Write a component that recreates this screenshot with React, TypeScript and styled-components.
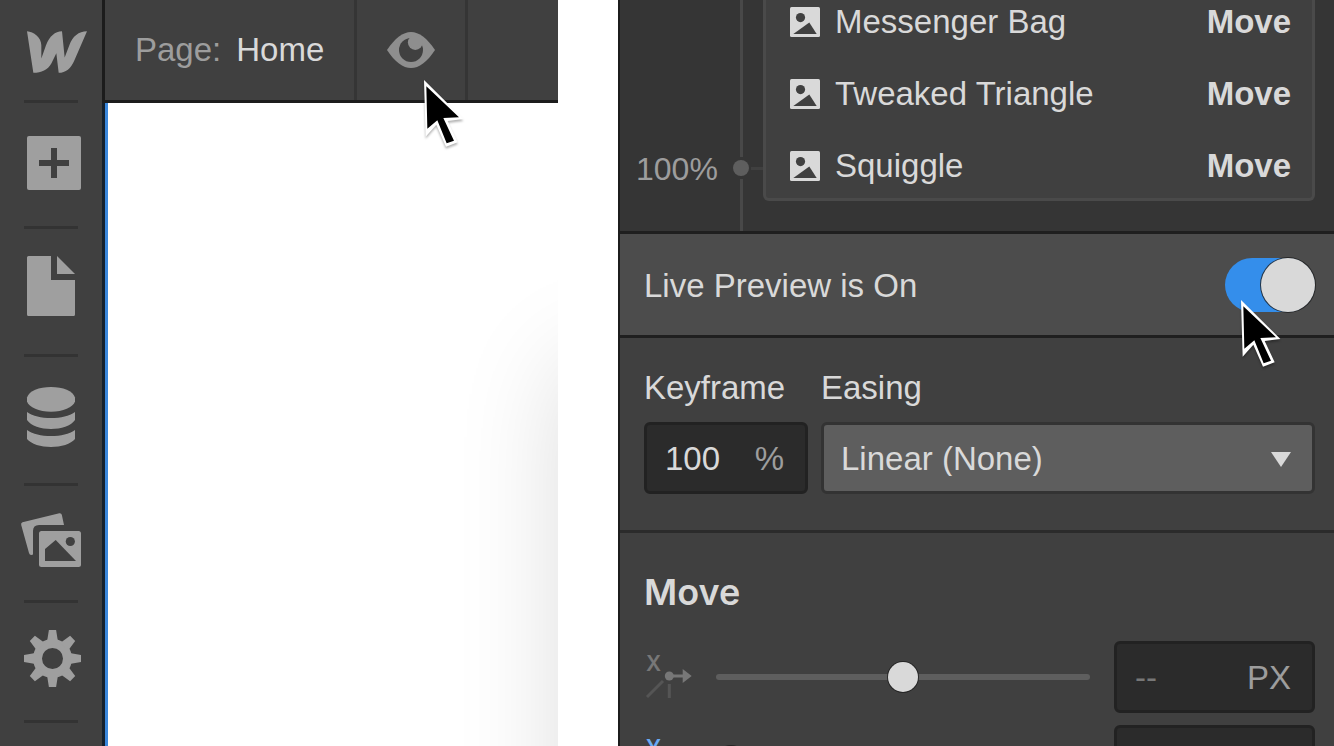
import React, { useState } from "react";
import styled, { createGlobalStyle } from "styled-components";

const color = {
  panel: "#404040",
  sunken: "#353535",
  raised: "#4c4c4c",
  field: "#2b2b2b",
  edge: "#1f1f1f",
  icon: "#9f9f9f",
  muted: "#9d9d9d",
  text: "#d9d9d9",
  control: "#5e5e5e",
  blue: "#348eeb",
};

const GlobalStyle = createGlobalStyle`
  *, *::before, *::after { box-sizing: border-box; }
  body {
    margin: 0;
    overflow: hidden;
    background: #fff;
    color: ${color.text};
    font: 33px/34px "Liberation Sans", Arial, sans-serif;
  }
  button, input, select { font: inherit; color: inherit; }
  button { border: 0; padding: 0; background: none; }
  svg { display: block; flex: none; }
`;

const Page = styled.div`
  display: flex;
  gap: 60px;
  height: 100vh;
  overflow: hidden;
`;

const Designer = styled.div`
  flex: 558 558 558px;
  min-width: 0;
  display: flex;
`;

const Sidebar = styled.nav`
  flex: none;
  width: 102px;
  padding: 0 24px;
  background: ${color.panel};
`;

const SideButton = styled.button<{ $top: number; $bottom: number; $left?: number }>`
  display: block;
  width: 54px;
  padding: ${(p) => p.$top}px 0 ${(p) => p.$bottom}px;
  border-bottom: 3px solid #333;
  color: ${color.icon};

  svg {
    margin-left: ${(p) => p.$left ?? 3}px;
    overflow: visible;
  }
`;

const Main = styled.div`
  flex: 1;
  min-width: 0;
  display: flex;
  flex-direction: column;
`;

const TopBar = styled.header`
  display: flex;
  flex: none;
  height: 103px;
  border-left: 3px solid #1c1c1c;
  border-bottom: 3px solid #1c1c1c;
  background: ${color.panel};
`;

const PagePicker = styled.button`
  display: flex;
  align-items: center;
  gap: 15px;
  width: 252px;
  padding-left: 30px;
  border-right: 3px solid #353535;
`;

const Muted = styled.span`
  color: ${color.muted};
`;

const PreviewButton = styled.button`
  position: relative;
  display: flex;
  align-items: center;
  width: 111px;
  padding-left: 30px;
  border-right: 3px solid #353535;
  color: #8e8e8e;
`;

const Pointer = styled.svg<{ $left: number; $top: number }>`
  position: absolute;
  z-index: 2;
  left: ${(p) => p.$left}px;
  top: ${(p) => p.$top}px;
  overflow: visible;
  pointer-events: none;
  filter: drop-shadow(0 2px 1px rgba(0, 0, 0, 0.3));
`;

const Canvas = styled.main`
  position: relative;
  flex: 1;
  overflow: hidden;
  border-left: 3px solid #13202d;
  background: #fff;
  box-shadow: inset 3px 0 0 #3a87dc;

  &::after {
    content: "";
    position: absolute;
    left: 100%;
    top: 260px;
    width: 400px;
    height: 200%;
    box-shadow: 4px 0 100px rgba(0, 0, 0, 0.14);
  }
`;

const Panel = styled.aside`
  flex: 716 716 716px;
  min-width: 0;
  border-left: 2px solid #1c1c1c;
  background: ${color.panel};
`;

const Timeline = styled.section`
  display: flex;
  background: ${color.sunken};
  border-bottom: 3px solid ${color.edge};
`;

const TimeLabel = styled.div`
  align-self: flex-end;
  width: 113px;
  padding: 0 0 45px 16px;
  color: ${color.muted};
  font-size: 32px;
`;

const Rail = styled.div`
  display: flex;
  flex-direction: column;
  align-items: center;
  gap: 3px;
  width: 16px;
  margin-right: 2px;
`;

const RailLine = styled.div<{ $grow?: boolean }>`
  flex: ${(p) => (p.$grow ? "1" : "none")};
  width: 3px;
  height: 52px;
  background: #484848;
`;

const RailDot = styled.div`
  width: 16px;
  height: 16px;
  border-radius: 50%;
  background: ${color.control};
`;

const Connector = styled.div`
  align-self: flex-end;
  width: 12px;
  height: 3px;
  margin-bottom: 61px;
  background: #404040;
`;

const ActionList = styled.ul`
  flex: 1;
  min-width: 0;
  display: flex;
  flex-direction: column;
  gap: 38px;
  margin: 0 19px 30px 0;
  padding: 5px 21px 15px 24px;
  list-style: none;
  background: ${color.panel};
  border: 3px solid #4a4a4a;
  border-top: 0;
  border-radius: 0 0 6px 6px;
`;

const ActionRow = styled.li`
  display: flex;
  align-items: center;
  gap: 15px;
`;

const ActionName = styled.span`
  flex: 1;
  min-width: 0;
  white-space: nowrap;
`;

const LiveRow = styled.label`
  display: flex;
  align-items: center;
  justify-content: space-between;
  height: 104px;
  padding: 0 19px 0 24px;
  background: ${color.raised};
  border-bottom: 3px solid ${color.edge};
`;

const LiveText = styled.span`
  padding-top: 2px;
`;

const SwitchWrap = styled.span`
  position: relative;
  display: flex;
`;

const Switch = styled.input`
  appearance: none;
  width: 90px;
  height: 54px;
  margin: 0;
  border-radius: 27px;
  background: ${color.control};

  &:checked { background: ${color.blue}; }

  &::before {
    content: "";
    display: block;
    width: 54px;
    height: 54px;
    border-radius: 50%;
    background: ${color.text};
    box-shadow: 0 0 0 1px rgba(30, 30, 30, 0.8);
  }

  &:checked::before { margin-left: 36px; }
`;

const EasingSection = styled.section`
  display: flex;
  gap: 13px;
  padding: 33px 19px 36px 24px;
  border-bottom: 3px solid ${color.field};
`;

const Group = styled.div<{ $grow?: boolean }>`
  flex: ${(p) => (p.$grow ? "1" : "0 0 164px")};
  min-width: 0;
`;

const GroupLabel = styled.label`
  display: block;
  margin-bottom: 17px;
`;

const Field = styled.div<{ $width?: number }>`
  flex: none;
  display: flex;
  align-items: center;
  width: ${(p) => (p.$width ? `${p.$width}px` : "100%")};
  height: 72px;
  padding: 2px 21px 0 18px;
  border: 3px solid #222;
  border-radius: 6px;
  background: ${color.field};
`;

const FieldInput = styled.input`
  flex: 1;
  min-width: 0;
  width: 0;
  padding: 0;
  border: 0;
  outline: 0;
  background: none;

  &::placeholder { color: #777; opacity: 1; }
`;

const SelectWrap = styled.div`
  position: relative;
`;

const Select = styled.select`
  appearance: none;
  display: block;
  width: 100%;
  height: 72px;
  padding: 2px 60px 0 17px;
  border: 3px solid #333;
  border-radius: 6px;
  background: ${color.control};
`;

const Caret = styled.svg`
  position: absolute;
  right: 24px;
  top: 30px;
  pointer-events: none;
`;

const MoveSection = styled.section`
  display: flex;
  flex-direction: column;
  gap: 12px;
  padding: 39px 19px 0 24px;
`;

const Heading = styled.h2`
  margin: 0 0 17px;
  font: 600 36px/40px Inter, "Liberation Sans", sans-serif;
`;

const AxisRow = styled.div`
  display: flex;
  align-items: center;
  gap: 24px;
`;

const Slider = styled.input`
  appearance: none;
  flex: 1;
  min-width: 0;
  height: 30px;
  margin: 0;
  background: none;

  &::-webkit-slider-runnable-track {
    height: 6px;
    border-radius: 3px;
    background: ${color.control};
  }

  &::-webkit-slider-thumb {
    appearance: none;
    width: 30px;
    height: 30px;
    margin-top: -12px;
    border-radius: 50%;
    background: ${color.text};
    box-shadow: 0 0 0 1px rgba(30, 30, 30, 0.8);
  }
`;

const AxisDrawing = styled.svg`
  overflow: visible;
`;

const AxisLetter = styled.text`
  font: 600 21px Inter, "Liberation Sans", sans-serif;
`;

const Logo = () => (
  <svg width="60" height="42" viewBox="0 0 180 125" fill="currentColor">
    <path d="M0 0C20 2 43 18 43 42L43 82L57 42C68 14 84 1 105 0L113 79L127 42C137 14 155 1 180 0L142 88C132 112 116 125 95 125L88 66L73 97C62 116 44 125 19 125Z" />
  </svg>
);

const AddIcon = () => (
  <svg width="54" height="54" viewBox="0 0 54 54">
    <rect width="54" height="54" rx="2" fill="currentColor" />
    <path d="M24 12h6v12h12v6H30v12h-6V30H12v-6h12z" fill={color.panel} />
  </svg>
);

const PageIcon = () => (
  <svg width="48" height="60" viewBox="0 0 48 60" fill="currentColor">
    <path d="M1.500 0H24V24H48V58.500Q48 60 46.500 60H1.500Q0 60 0 58.500V1.500Q0 0 1.500 0ZM30 0L48 18H30Z" />
  </svg>
);

const DatabaseIcon = () => (
  <svg width="48" height="60" viewBox="0 0 48 60" fill="currentColor">
    <path d="M0 10.500C2 4 12 0 24 0S46 4 48 10.500V14.500C46 20.500 36 24.700 24 24.700S2 20.500 0 14.500Z" />
    <path d="M0 25C6 29 14 31 24 31S42 29 48 25V33C44 39 34 42 24 42S4 39 0 33Z" />
    <path d="M0 43C6 47 14 49 24 49S42 47 48 43V52C44 57 34 60 24 60S4 57 0 52Z" />
  </svg>
);

const AssetsIcon = () => (
  <svg width="60" height="54" viewBox="0 0 60 54" fill="currentColor">
    <path d="M1.500 9.300L38.300.2Q40.300-.2 40.800 1.800L43 12H18Q12 12 12 18V41.600L10.500 42Q8.600 42.200 8 40L.2 12Q-.3 9.800 1.500 9.300Z" />
    <rect x="18" y="18" width="42" height="36" rx="2.500" />
    <path d="M24 36L34.700 27L55 48H24Z" fill={color.panel} />
    <circle cx="49.300" cy="28.500" r="4.600" fill={color.panel} />
  </svg>
);

const GearIcon = () => (
  <svg width="57" height="57" viewBox="-28.500 -28.500 57 57">
    <circle r="15" fill="none" stroke="currentColor" strokeWidth="9" />
    {[0, 45, 90, 135, 180, 225, 270, 315].map((angle) => (
      <path
        key={angle}
        transform={`rotate(${angle})`}
        d="M-3.600-28.500H3.600L5.200-18.500L7.500-16.500H-7.500L-5.200-18.500Z"
        fill="currentColor"
      />
    ))}
  </svg>
);

const EyeIcon = () => (
  <svg width="48" height="36" viewBox="0 0 48 36">
    <path d="M0 18C8 6 16 0 24 0S40 6 48 18C40 30 32 36 24 36S8 30 0 18Z" fill="currentColor" />
    <circle cx="24" cy="18" r="12" fill={color.panel} />
    <circle cx="28.300" cy="10.600" r="7.400" fill="currentColor" />
  </svg>
);

const PictureIcon = () => (
  <svg width="30" height="30" viewBox="0 0 30 30">
    <rect width="30" height="30" rx="1.500" fill={color.text} />
    <circle cx="10.500" cy="10.600" r="4.600" fill={color.panel} />
    <path d="M3.300 27L19.300 15.500L26.700 27Z" fill={color.panel} />
  </svg>
);

const MousePointer = ({ left, top }: { left: number; top: number }) => (
  <Pointer $left={left} $top={top} width="40" height="67" viewBox="0 0 120 201" aria-hidden="true">
    <path d="M0 0L5 170L37 134L66 200L101 187L71 123L118 117Z" fill="#fff" />
    <path d="M7 19L10 146L40 121L68 190L90 182L58 114L105 112Z" fill="#000" />
  </Pointer>
);

const AxisIcon = ({ axis, tint }: { axis: string; tint: string }) => (
  <AxisDrawing width="48" height="46" viewBox="0 0 48 46" aria-hidden="true">
    <AxisLetter x="2" y="17" fill={tint}>
      {axis}
    </AxisLetter>
    <path d="M3 43L19 27M25.300 30V44" stroke="#555" strokeWidth="3" fill="none" />
    <circle cx="25.300" cy="22" r="4.500" fill="#777" />
    <path d="M28 20.500H38.700V15L47.700 22L38.700 29V23.500H28Z" fill="#777" />
  </AxisDrawing>
);

const actions = ["Messenger Bag", "Tweaked Triangle", "Squiggle"];

const axes = [
  { axis: "X", tint: "#777", value: 50 },
  { axis: "Y", tint: "#6aaaf5", value: 0 },
];

export default function App() {
  const [live, setLive] = useState(true);

  return (
    <>
      <GlobalStyle />
      <Page>
        <Designer>
          <Sidebar aria-label="Designer tools">
            <SideButton $top={31} $bottom={27} aria-label="Menu"><Logo /></SideButton>
            <SideButton $top={33} $bottom={36} aria-label="Add elements"><AddIcon /></SideButton>
            <SideButton $top={27} $bottom={38} aria-label="Pages"><PageIcon /></SideButton>
            <SideButton $top={30} $bottom={36} aria-label="Collections"><DatabaseIcon /></SideButton>
            <SideButton $top={27} $bottom={33} $left={-3} aria-label="Assets"><AssetsIcon /></SideButton>
            <SideButton $top={27} $bottom={33} $left={0} aria-label="Settings"><GearIcon /></SideButton>
          </Sidebar>
          <Main>
            <TopBar>
              <PagePicker>
                <Muted>Page:</Muted>
                <span>Home</span>
              </PagePicker>
              <PreviewButton aria-label="Preview">
                <EyeIcon />
                <MousePointer left={67} top={80} />
              </PreviewButton>
            </TopBar>
            <Canvas />
          </Main>
        </Designer>

        <Panel>
          <Timeline>
            <TimeLabel>100%</TimeLabel>
            <Rail>
              <RailLine $grow />
              <RailDot />
              <RailLine />
            </Rail>
            <Connector />
            <ActionList>
              {actions.map((name) => (
                <ActionRow key={name}>
                  <PictureIcon />
                  <ActionName>{name}</ActionName>
                  <strong>Move</strong>
                </ActionRow>
              ))}
            </ActionList>
          </Timeline>

          <LiveRow>
            <LiveText>Live Preview is {live ? "On" : "Off"}</LiveText>
            <SwitchWrap>
              <Switch
                type="checkbox"
                role="switch"
                checked={live}
                onChange={(e) => setLive(e.target.checked)}
              />
              <MousePointer left={16} top={42} />
            </SwitchWrap>
          </LiveRow>

          <EasingSection>
            <Group>
              <GroupLabel htmlFor="keyframe">Keyframe</GroupLabel>
              <Field>
                <FieldInput id="keyframe" defaultValue="100" />
                <Muted>%</Muted>
              </Field>
            </Group>
            <Group $grow>
              <GroupLabel htmlFor="easing">Easing</GroupLabel>
              <SelectWrap>
                <Select id="easing" defaultValue="linear">
                  <option value="linear">Linear (None)</option>
                  <option value="ease">Ease</option>
                </Select>
                <Caret width="20" height="15" viewBox="0 0 20 15">
                  <path d="M0 0H20L10 15Z" fill={color.text} />
                </Caret>
              </SelectWrap>
            </Group>
          </EasingSection>

          <MoveSection>
            <Heading>Move</Heading>
            {axes.map(({ axis, tint, value }) => (
              <AxisRow key={axis}>
                <AxisIcon axis={axis} tint={tint} />
                <Slider type="range" defaultValue={value} aria-label={`Move ${axis}`} />
                <Field $width={201}>
                  <FieldInput placeholder="--" aria-label={`Move ${axis} in pixels`} />
                  <Muted>PX</Muted>
                </Field>
              </AxisRow>
            ))}
          </MoveSection>
        </Panel>
      </Page>
    </>
  );
}
